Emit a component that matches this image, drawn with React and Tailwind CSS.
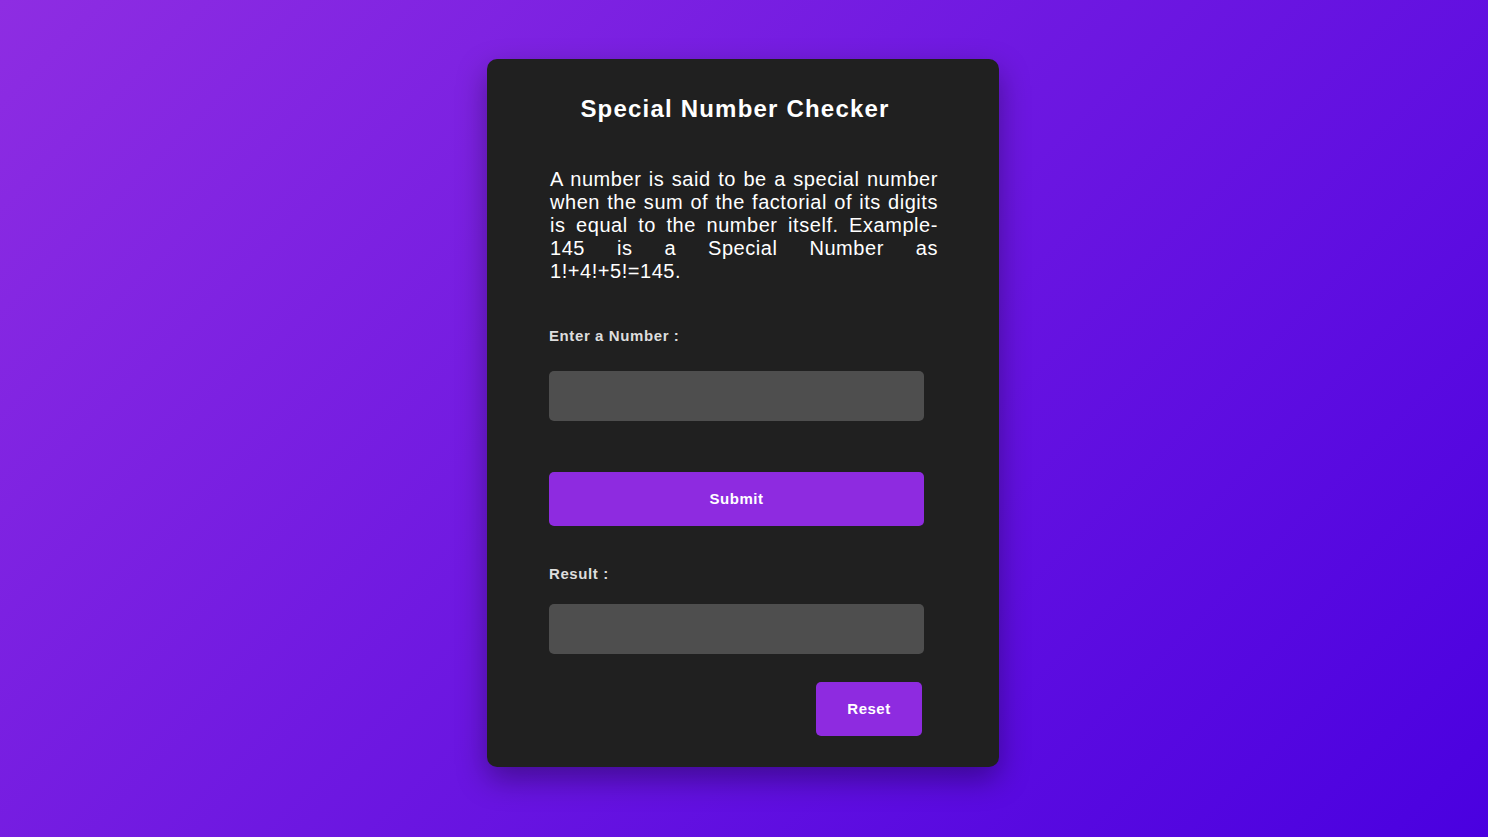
import { useState } from 'react';

function factorial(n) {
  let f = 1;
  for (let i = 2; i <= n; i++) f *= i;
  return f;
}

export default function App() {
  const [value, setValue] = useState('');
  const [result, setResult] = useState('');

  const check = () => {
    if (value === '') return;
    const sum = value.split('').reduce((s, d) => s + factorial(Number(d)), 0);
    setResult(sum === Number(value) ? `${value} is a Special Number` : `${value} is not a Special Number`);
  };

  const reset = () => {
    setValue('');
    setResult('');
  };

  return (
    <div
      className="min-h-screen w-full bg-[linear-gradient(135deg,#8e2de2,#4a00e0)] pt-[59px] pb-[70px]"
      style={{ fontFamily: '"Liberation Sans", Arial, sans-serif' }}
    >
      <div className="ml-[calc(50%-257px)] w-[512px] rounded-[10px] bg-[#202020] px-[62px] pt-[36px] pb-[31px] shadow-[0_12px_30px_rgba(0,0,0,0.35)] flex flex-col">
        <h1 className="text-center text-[24px] leading-[28px] font-bold text-white tracking-[1.2px] mr-[16px]">
          Special Number Checker
        </h1>

        <p className="mt-[45px] ml-[1px] mr-[-1px] text-[20px] leading-[23px] text-white text-justify tracking-[0.55px]">
          A number is said to be a special number when the sum of the factorial of its digits is equal to the number itself. Example- 145 is a Special Number as 1!+4!+5!=145.
        </p>

        <label className="mt-[44px] text-[15px] leading-[17px] font-bold text-[#dddddd] tracking-[0.6px]">
          Enter a Number :
        </label>
        <input
          type="number"
          value={value}
          onChange={(e) => setValue(e.target.value)}
          className="mt-[27px] w-[375px] h-[50px] rounded-[5px] bg-[#4e4e4e] px-4 text-white text-[16px] outline-none"
        />

        <button
          onClick={check}
          className="mt-[51px] w-[375px] h-[54px] rounded-[5px] bg-[#8e2be0] text-white text-[15px] font-bold tracking-[0.5px]"
        >
          Submit
        </button>

        <label className="mt-[39px] text-[15px] leading-[17px] font-bold text-[#dddddd] tracking-[0.6px]">
          Result :
        </label>
        <div className="mt-[22px] w-[375px] h-[50px] rounded-[5px] bg-[#4e4e4e] px-4 flex items-center text-white text-[16px]">
          {result}
        </div>

        <div className="mt-[28px] w-[375px] flex justify-end">
          <button
            onClick={reset}
            className="w-[106px] h-[54px] mr-[2px] rounded-[5px] bg-[#8e2be0] text-white text-[15px] font-bold tracking-[0.5px]"
          >
            Reset
          </button>
        </div>
      </div>
    </div>
  );
}
